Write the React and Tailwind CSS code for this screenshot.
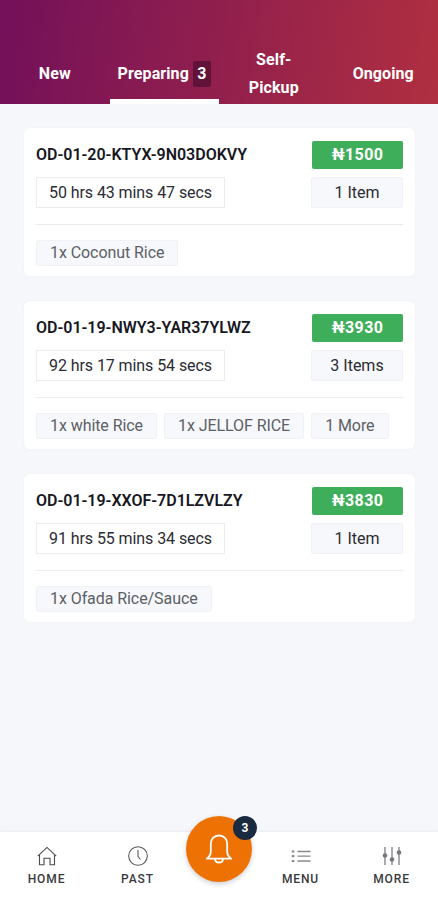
import React, { useState } from "react";

const tabs = [
  { name: "New" },
  { name: "Preparing", count: 3 },
  { name: "Self-Pickup" },
  { name: "Ongoing" },
];

const orders = [
  {
    id: "OD-01-20-KTYX-9N03DOKVY",
    price: "₦1500",
    time: "50 hrs 43 mins 47 secs",
    items: "1 Item",
    list: ["1x Coconut Rice"],
  },
  {
    id: "OD-01-19-NWY3-YAR37YLWZ",
    price: "₦3930",
    time: "92 hrs 17 mins 54 secs",
    items: "3 Items",
    list: ["1x white Rice", "1x JELLOF RICE", "1 More"],
  },
  {
    id: "OD-01-19-XXOF-7D1LZVLZY",
    price: "₦3830",
    time: "91 hrs 55 mins 34 secs",
    items: "1 Item",
    list: ["1x Ofada Rice/Sauce"],
  },
];

function HomeIcon() {
  return (
    <svg width="20" height="20" viewBox="0 0 20 20" fill="none" stroke="#4b4b4f" strokeWidth="1.1">
      <path d="M0.8 10.2 10 1.4l9.2 8.8" />
      <path d="M2.5 8.8v9.9h4.5v-6.5h6v6.5h4.5V8.8" />
    </svg>
  );
}

function ClockIcon() {
  return (
    <svg width="20" height="20" viewBox="0 0 20 20" fill="none" stroke="#5a5a5e" strokeWidth="1.1">
      <circle cx="10" cy="10" r="9.3" />
      <path d="M10 4v6.5l2.5 3" />
    </svg>
  );
}

function ListIcon() {
  return (
    <svg width="20" height="20" viewBox="0 0 20 20" fill="none" stroke="#8a8a8e" strokeWidth="1.3">
      <path d="M6.5 5.5h13M6.5 10.2h13M6.5 15h13" />
      <path d="M0.8 5.5h2.6M0.8 10.2h2.6M0.8 15h2.6" strokeWidth="2.2" />
    </svg>
  );
}

function SlidersIcon() {
  return (
    <svg width="20" height="20" viewBox="0 0 20 20" fill="none" stroke="#a2a2a6" strokeWidth="1.8">
      <path d="M3 1v18M10 1v18M17 1v18" />
      <g fill="#77777b" stroke="none">
        <circle cx="3" cy="9.5" r="2.3" />
        <circle cx="10" cy="13.5" r="2.3" />
        <circle cx="17" cy="6.5" r="2.3" />
      </g>
    </svg>
  );
}

function BellIcon() {
  return (
    <svg width="28" height="30" viewBox="0 0 28 30" fill="none" stroke="white" strokeWidth="1.8" strokeLinejoin="round">
      <path d="M14 1.5c-5 0-8.2 3.7-8.2 8.500v7.500c0 3-1.500 5.400-4 7.200h24.400c-2.500-1.800-4-4.200-4-7.200V10c0-4.800-3.200-8.500-8.200-8.500z" />
      <path d="M10 24.700c0 2.200 1.700 3.800 4 3.800s4-1.600 4-3.800" />
    </svg>
  );
}

function NavItem({ icon, label }) {
  return (
    <button className="w-[91px] h-full flex flex-col items-center pt-[14px]">
      {icon}
      <span className="mt-[5px] text-xs leading-4 font-medium tracking-[0.9px] text-[#3a3a3e]">{label}</span>
    </button>
  );
}

function OrderCard({ order }) {
  return (
    <div className="h-[148px] bg-white rounded-md px-[12px] pt-[13px] shadow-[0_0_2px_rgba(40,60,100,0.05)]">
      <div className="flex items-center justify-between">
        <p className="text-base font-semibold tracking-[-0.02px] text-[#17171f]">{order.id}</p>
        <span className="w-[91px] h-[28px] rounded-xs bg-[#3fae5a] text-white font-bold tracking-[0.4px] flex items-center justify-center">
          {order.price}
        </span>
      </div>
      <div className="mt-[8px] flex items-center justify-between">
        <span className="h-[31px] w-[189px] border border-[#ececef] flex items-center justify-center tracking-[-0.08px] text-[#2b2b33]">
          {order.time}
        </span>
        <span className="w-[92px] h-[31px] rounded-xs border border-[#f0f2f5] bg-[#f7f8fb] flex items-center justify-center text-[#2b2b33]">
          {order.items}
        </span>
      </div>
      <div className="mt-[16px] border-t border-[#ececee]" />
      <div className="mt-[15px] flex gap-[7px]">
        {order.list.map((item) => (
          <span key={item} className="h-[26px] px-[13px] rounded-xs border border-[#f0f2f5] bg-[#f6f8fb] flex items-center tracking-[-0.07px] text-[#5d6066]">
            {item}
          </span>
        ))}
      </div>
    </div>
  );
}

export default function App() {
  const [active, setactive] = useState("Preparing");

  return (
    <div className="w-full h-screen flex flex-col overflow-hidden bg-[#f5f7fb] font-[Roboto,sans-serif] text-base">
      <header className="h-[104px] shrink-0 pt-[42px] bg-[linear-gradient(98deg,#73105a_0%,#b02f40_100%)]">
        <div className="h-[62px] grid grid-cols-4">
          {tabs.map((tab) => (
            <button
              key={tab.name}
              onClick={() => setactive(tab.name)}
              className={
                "flex items-center justify-center pt-[2px] text-white font-bold leading-[28px] tracking-[0.1px] " +
                (active === tab.name ? "shadow-[inset_0_-5px_0_white]" : "")
              }
            >
              <span className={tab.name === "Self-Pickup" ? "w-[60px]" : ""}>{tab.name}</span>
              {tab.count && (
                <span className="ml-[4px] w-[18px] h-[26px] leading-[26px] rounded-xs bg-[#611238]">{tab.count}</span>
              )}
            </button>
          ))}
        </div>
      </header>

      <main className="flex-1 pl-[24px] pr-[23px] pt-[24px] flex flex-col gap-[25px]">
        {orders.map((order) => (
          <OrderCard key={order.id} order={order} />
        ))}
      </main>

      <nav className="h-[68px] shrink-0 bg-white flex justify-between shadow-[0_-1px_3px_rgba(40,60,100,0.05)]">
        <div className="flex pl-px">
          <NavItem icon={<HomeIcon />} label="HOME" />
          <NavItem icon={<ClockIcon />} label="PAST" />
        </div>
        <button className="relative -mt-[16px] w-[66px] h-[66px] shrink-0 rounded-full bg-[#ee7203] flex items-center justify-center shadow-[0_2px_5px_rgba(60,60,90,0.25)]">
          <BellIcon />
          <span className="absolute top-0 -right-[5px] w-6 h-6 rounded-full bg-[#1a2a40] text-white text-xs font-bold flex items-center justify-center">
            3
          </span>
        </button>
        <div className="flex pr-px">
          <NavItem icon={<ListIcon />} label="MENU" />
          <NavItem icon={<SlidersIcon />} label="MORE" />
        </div>
      </nav>
    </div>
  );
}
